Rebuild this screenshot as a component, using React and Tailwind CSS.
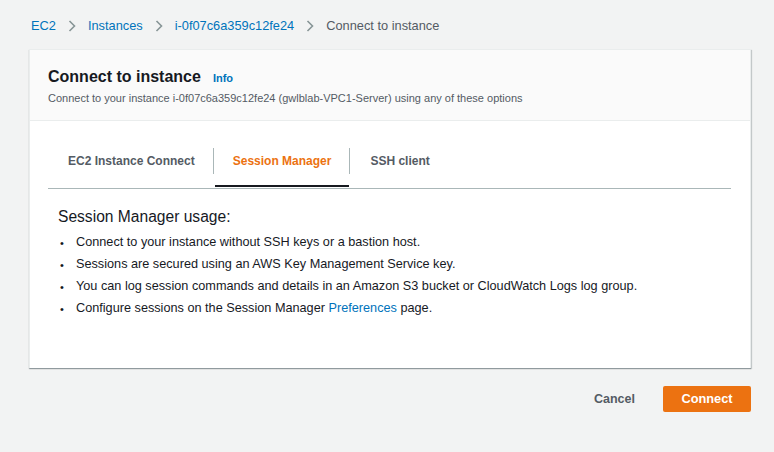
const font = { fontFamily: '"Liberation Sans", Arial, sans-serif' };

const Crumb = ({ children, link = true }) => (
  <span className={link ? 'text-[#0073bb]' : 'text-[#545b64]'}>{children}</span>
);

const Sep = () => (
  <svg width="8" height="12" viewBox="0 0 8 12" className="mx-[12px]">
    <path d="M1.5 1 L6.5 6 L1.5 11" fill="none" stroke="#879596" strokeWidth="1.6" />
  </svg>
);

const bullets = [
  'Connect to your instance without SSH keys or a bastion host.',
  'Sessions are secured using an AWS Key Management Service key.',
  'You can log session commands and details in an Amazon S3 bucket or CloudWatch Logs log group.',
];

export default function App() {
  return (
    <div style={font} className="w-full h-[452px] bg-[#f2f3f3] pl-[29px] pr-[23px] text-[#16191f]">
      {/* Breadcrumbs */}
      <div className="h-[49px] pt-[3px] flex items-center text-[12.8px] pl-[2px]">
        <Crumb>EC2</Crumb>
        <Sep />
        <Crumb>Instances</Crumb>
        <Sep />
        <Crumb>i-0f07c6a359c12fe24</Crumb>
        <Sep />
        <Crumb link={false}>Connect to instance</Crumb>
      </div>

      {/* Card */}
      <div className="bg-white border-l border-t border-r border-[#eaeded] shadow-[0_1px_1px_0_rgba(0,28,36,0.3),1px_1px_1px_0_rgba(0,28,36,0.15)] h-[319px] flex flex-col">
        <div className="bg-[#fafafa] border-b border-[#eaeded] h-[71px] px-[18px] pt-[16px]">
          <div className="flex items-baseline gap-[12px]">
            <h1 className="text-[16px] font-bold leading-[22px]">Connect to instance</h1>
            <span className="text-[11px] font-bold text-[#0073bb]">Info</span>
          </div>
          <p className="text-[11px] text-[#545b64] mt-[2px]">
            Connect to your instance i-0f07c6a359c12fe24 (gwlblab-VPC1-Server) using any of these options
          </p>
        </div>

        <div className="px-[18px] pr-[19px]">
          {/* Tabs */}
          <div className="flex border-b border-[#aab7b8] text-[12px] font-bold">
            <div className="h-[67px] pt-[27px] pl-[20px]">
              <div className="h-[26px] pr-[18px] flex items-center border-r border-[#aab7b8] text-[#545b64]">
                EC2 Instance Connect
              </div>
            </div>
            <div className="relative h-[67px] pt-[27px] pl-[19px]">
              <div className="h-[26px] pr-[18px] flex items-center border-r border-[#aab7b8] text-[#ec7211]">
                Session Manager
              </div>
              <div className="absolute left-[1px] right-[1px] bottom-[1px] h-[2px] bg-[#16191f]" />
            </div>
            <div className="h-[67px] pt-[27px] pl-[20px]">
              <div className="h-[26px] flex items-center text-[#545b64]">SSH client</div>
            </div>
          </div>

          {/* Tab content */}
          <div className="pl-[10px] pt-[17px]">
            <h2 className="text-[15.6px] leading-[22px] text-[#16191f]">Session Manager usage:</h2>
            <ul className="mt-[4px] text-[12.7px] text-[#16191f]">
              {bullets.map((b) => (
                <li key={b} className="flex items-center h-[22px]">
                  <span className="w-[18px] pl-[2px] text-[11px]">•</span>
                  {b}
                </li>
              ))}
              <li className="flex items-center h-[22px]">
                <span className="w-[18px] pl-[2px] text-[11px]">•</span>
                Configure sessions on the Session Manager&nbsp;<span className="text-[#0073bb]">Preferences</span>&nbsp;page.
              </li>
            </ul>
          </div>
        </div>
      </div>

      {/* Actions */}
      <div className="flex justify-end items-center mt-[18px] gap-[28px]">
        <button className="text-[12.5px] font-bold text-[#545b64]">Cancel</button>
        <button className="w-[88px] h-[26px] rounded-[2px] bg-[#ec7211] text-white text-[12.8px] font-bold">
          Connect
        </button>
      </div>
    </div>
  );
}
